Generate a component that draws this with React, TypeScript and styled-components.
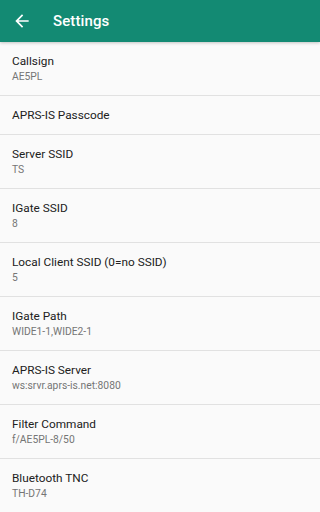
import React from "react";
import styled, { createGlobalStyle } from "styled-components";

const Global = createGlobalStyle`
  html, body { margin: 0; padding: 0; background: #fafafa; }
  body { font-family: Roboto, "Noto Sans", "Liberation Sans", sans-serif; -webkit-font-smoothing: antialiased; }
  * { box-sizing: border-box; }
`;

const Page = styled.div`
  width: 100%;
  height: 512px;
  overflow: hidden;
  background: #fafafa;
  display: flex;
  flex-direction: column;
`;

const Toolbar = styled.header`
  position: relative;
  z-index: 1;
  height: 42px;
  flex: 0 0 42px;
  background: #138a73;
  display: flex;
  align-items: center;
  padding-left: 12px;
  box-shadow: 0 1px 3px rgba(0, 0, 0, 0.22);
`;

const NavButton = styled.span`
  width: 20px;
  height: 20px;
  display: flex;
  align-items: center;
  justify-content: center;
`;

const Title = styled.h1`
  margin: 0 0 0 21px;
  font-size: 15px;
  font-weight: 500;
  color: #ffffff;
  letter-spacing: 0.1px;
`;

const List = styled.div`
  display: flex;
  flex-direction: column;
`;

const Row = styled.div<{ $single?: boolean }>`
  height: ${(p) => (p.$single ? 39 : 54)}px;
  flex: 0 0 auto;
  padding: 0 12px;
  display: flex;
  flex-direction: column;
  justify-content: center;
  border-bottom: 1px solid #e1e1e1;
`;

const RowTitle = styled.div`
  font-size: 11.8px;
  line-height: 16.5px;
  color: #212121;
`;

const Summary = styled.div`
  font-size: 10.3px;
  line-height: 14px;
  color: #757575;
`;

const items: { title: string; summary?: string }[] = [
  { title: "Callsign", summary: "AE5PL" },
  { title: "APRS-IS Passcode" },
  { title: "Server SSID", summary: "TS" },
  { title: "IGate SSID", summary: "8" },
  { title: "Local Client SSID (0=no SSID)", summary: "5" },
  { title: "IGate Path", summary: "WIDE1-1,WIDE2-1" },
  { title: "APRS-IS Server", summary: "ws:srvr.aprs-is.net:8080" },
  { title: "Filter Command", summary: "f/AE5PL-8/50" },
  { title: "Bluetooth TNC", summary: "TH-D74" },
];

export default function App() {
  return (
    <Page>
      <Global />
      <Toolbar>
        <NavButton>
          <svg width="20" height="20" viewBox="0 0 24 24">
            <path
              fill="#ffffff"
              d="M20 11H7.83l5.59-5.59L12 4l-8 8 8 8 1.41-1.41L7.83 13H20v-2z"
            />
          </svg>
        </NavButton>
        <Title>Settings</Title>
      </Toolbar>
      <List>
        {items.map((it) => (
          <Row key={it.title} $single={!it.summary}>
            <RowTitle>{it.title}</RowTitle>
            {it.summary && <Summary>{it.summary}</Summary>}
          </Row>
        ))}
      </List>
    </Page>
  );
}
